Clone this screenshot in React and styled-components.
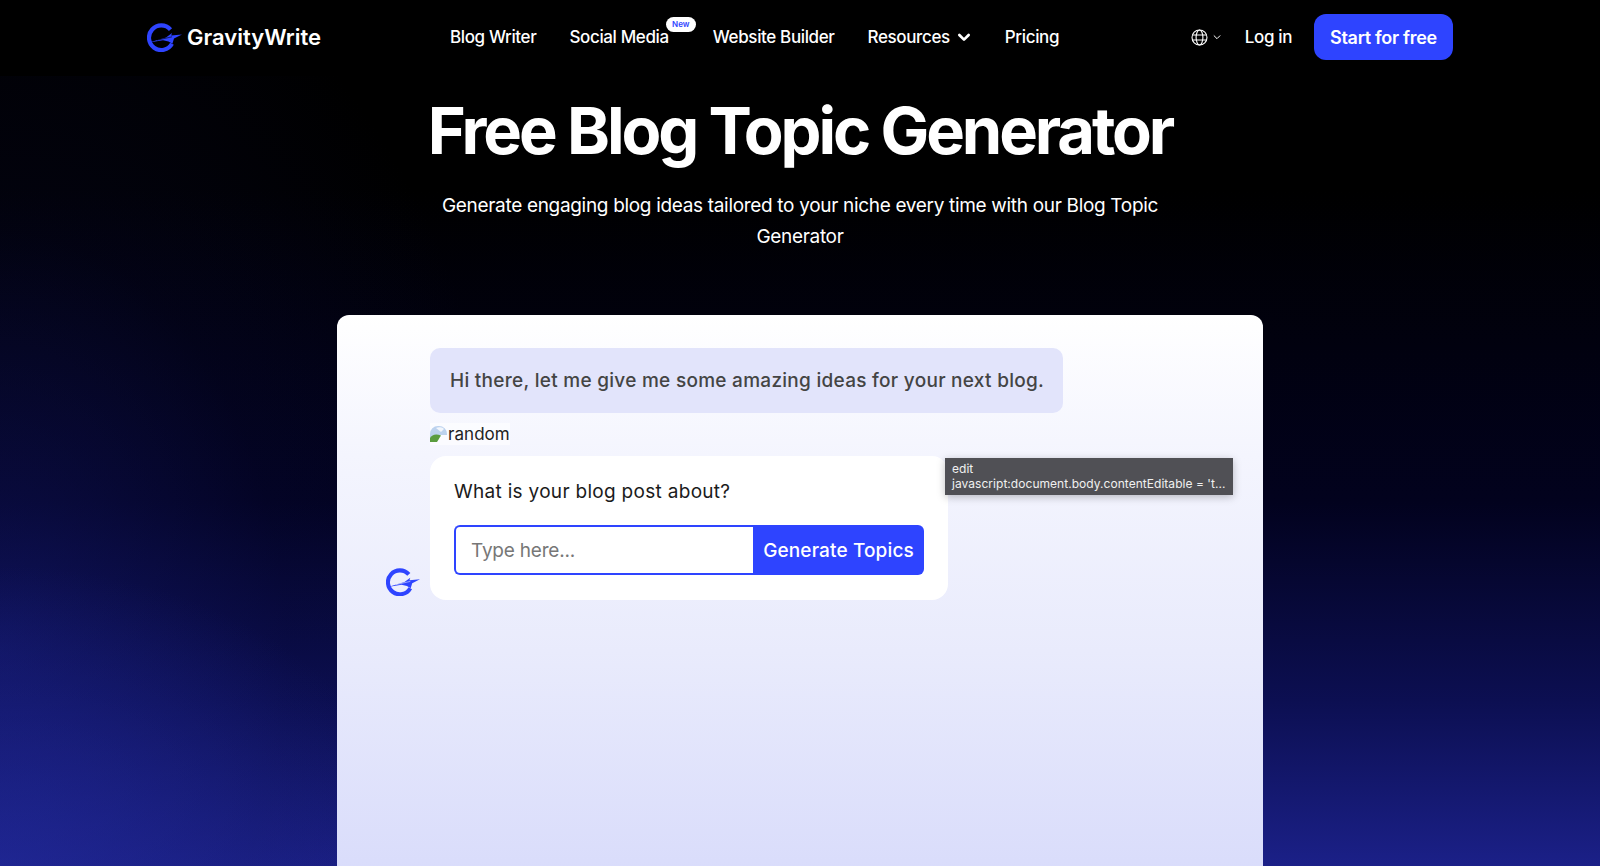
import React from 'react';
import styled, { createGlobalStyle } from 'styled-components';

const GlobalStyle = createGlobalStyle`
  html, body {
    margin: 0;
    height: 866px;
    overflow: hidden;
    background: #000;
    font-family: Inter, "Liberation Sans", sans-serif;
  }
`

const Page = styled.div`
  height: 866px;
  overflow: hidden;
  display: flex;
  flex-direction: column;
  background:
    radial-gradient(420px 300px at 0% 100%, rgba(36, 44, 160, 0.55) 0%, rgba(30, 36, 140, 0) 100%),
    radial-gradient(520px 760px at 0% 75%, rgba(24, 30, 130, 0.42) 0%, rgba(10, 12, 70, 0.2) 55%, rgba(0, 0, 40, 0) 100%),
    linear-gradient(180deg, #000 0%, #000 22%, #02021e 58%, #0c0f52 81%, #1b2088 100%);
`

const Nav = styled.nav`
  height: 76px;
  flex: none;
  box-sizing: border-box;
  background: #000;
  display: flex;
  align-items: center;
  padding: 0 147px 2px;
`

const Brand = styled.div`
  display: flex;
  align-items: center;
  gap: 5px;
  width: 303px;
  color: #fff;
  font-size: 22px;
  font-weight: 600;
`

const Links = styled.div`
  display: flex;
  align-items: center;
  gap: 33px;
  flex: 1;
`

const NavLink = styled.a`
  position: relative;
  display: flex;
  align-items: center;
  gap: 6px;
  margin-right: ${props => props.$badged ? '11px' : '0'};
  color: #fff;
  font-size: 17px;
  font-weight: 500;
  letter-spacing: -0.37px;
`

const NewBadge = styled.span`
  position: absolute;
  top: -10px;
  right: -27px;
  width: 30px;
  height: 15px;
  border-radius: 8px;
  background: #fff;
  color: #2e44ff;
  font-size: 8px;
  font-weight: 600;
  letter-spacing: 0;
  line-height: 15px;
  text-align: center;
`

const NavRight = styled.div`
  display: flex;
  align-items: center;
`

const Lang = styled.div`
  display: flex;
  align-items: center;
  gap: 4px;
  margin-right: 23px;
  color: #fff;
`

const StartButton = styled.a`
  margin-left: 22px;
  width: 139px;
  height: 46px;
  border-radius: 12px;
  background: #2e44ff;
  color: #fff;
  font-size: 18px;
  font-weight: 600;
  letter-spacing: -0.3px;
  display: flex;
  align-items: center;
  justify-content: center;
`

const Hero = styled.header`
  display: flex;
  flex-direction: column;
  align-items: center;
  color: #fff;
`

const Title = styled.h1`
  margin: 14px 0 0;
  font-size: 65px;
  line-height: 82px;
  font-weight: 700;
  letter-spacing: -3.08px;
`

const Subtitle = styled.p`
  margin: 18px 0 0;
  width: 760px;
  text-align: center;
  font-size: 19px;
  line-height: 31px;
  letter-spacing: -0.32px;
`

const Card = styled.main`
  position: relative;
  flex: none;
  width: 926px;
  height: 560px;
  margin: 63px 0 0 337px;
  box-sizing: border-box;
  padding: 33px 0 0 93px;
  border-radius: 12px 12px 0 0;
  background: linear-gradient(180deg, #ffffff 0%, #f4f5fe 25%, #e9ebfc 60%, #d9dcfb 100%);
`

const Bubble = styled.div`
  display: inline-block;
  padding: 0 19px 0 20px;
  height: 65px;
  line-height: 65px;
  border-radius: 10px;
  background: #e2e4fb;
  color: #444;
  font-size: 19px;
  font-weight: 500;
  letter-spacing: 0.28px;
`

const BrokenImage = styled.div`
  display: flex;
  align-items: center;
  width: fit-content;
  height: 22px;
  margin-top: 10px;
  background: rgba(255, 255, 255, 0.6);
  color: #222;
  font-size: 17px;
  letter-spacing: 0.05px;
`

const ChatRow = styled.div`
  position: relative;
  margin-top: 11px;
  width: 518px;
`

const Avatar = styled.div`
  position: absolute;
  left: -44px;
  bottom: 4px;
  display: flex;
`

const FormCard = styled.div`
  box-sizing: border-box;
  height: 144px;
  padding: 24px 24px 0;
  border-radius: 16px;
  background: #fff;
`

const Question = styled.div`
  color: #1b1b1b;
  font-size: 19px;
  line-height: 24px;
  letter-spacing: 0.3px;
`

const InputRow = styled.div`
  display: flex;
  height: 50px;
  margin-top: 21px;
`

const TypeInput = styled.input`
  box-sizing: border-box;
  width: 299px;
  height: 100%;
  padding: 0 15px;
  border: 2px solid #2e44ff;
  border-right: 0;
  border-radius: 6px 0 0 6px;
  outline: none;
  background: #fff;
  font-family: inherit;
  font-size: 19px;
  letter-spacing: -0.2px;
  &::placeholder { color: #777; opacity: 1; }
`

const GenerateButton = styled.button`
  flex: 1;
  height: 100%;
  border: 0;
  border-radius: 0 6px 6px 0;
  background: #2e44ff;
  color: #fff;
  font-family: inherit;
  font-size: 19px;
  font-weight: 500;
  letter-spacing: 0.14px;
  padding: 0;
`

const Tooltip = styled.div`
  position: absolute;
  left: 608px;
  top: 143px;
  box-sizing: border-box;
  width: 288px;
  height: 37px;
  padding: 3px 7px;
  background: #505055;
  color: #f0f0f0;
  font-size: 12px;
  line-height: 15px;
  letter-spacing: 0.04px;
  box-shadow: 0 2px 8px rgba(0, 0, 0, 0.25);
  white-space: nowrap;
`

const Logo = ({ size, slit }) => (
  <svg width={size} height={size * 29 / 35} viewBox="0 0 35 29" fill="none">
    <path d="M23.5 6.6 A12.3 12.3 0 1 0 25 20.8" stroke="#2e44ff" strokeWidth="4.2" />
    <path d="M2 19.5 L19 14.4 L25 10 L24.2 12.6 L35 11.6 L27 15.6 L25.4 20.8 L21.5 18.6 L16 17.2 Z" fill="#2e44ff" />
    <path d="M10 17.2 L25 13.8" stroke={slit} strokeWidth="0.6" />
  </svg>
);

const Globe = () => (
  <svg width="17" height="17" viewBox="0 0 17 17" fill="none" stroke="#fff" strokeWidth="1.1">
    <circle cx="8.5" cy="8.5" r="7.5" />
    <ellipse cx="8.5" cy="8.5" rx="3.4" ry="7.5" />
    <path d="M1.4 6h14.2M1.4 11h14.2" />
  </svg>
);

const Chevron = ({ size, width }) => (
  <svg width={size} height={size} viewBox="0 0 12 12" fill="none" stroke="#fff" strokeWidth={width} strokeLinecap="round" strokeLinejoin="round">
    <path d="M2.5 4.5 6 8l3.5-3.5" />
  </svg>
);

const BrokenIcon = () => (
  <svg width="18" height="16" viewBox="0 0 18 16">
    <path d="M0 16V8a8 8 0 0 1 8-8h1a8 8 0 0 1 8 8v1H10l-4 7z" fill="#bcd2ee" />
    <path d="M6 2a5 3 0 0 1 8 1l-3 3z" fill="#f2f6fc" />
    <path d="M0 16v-4c2-3.5 6-4.5 11-2.5L7 16z" fill="#5a9c3f" />
  </svg>
);

const App = () => (
  <Page>
    <GlobalStyle />
    <Nav>
      <Brand>
        <Logo size={35} slit="#000" />
        GravityWrite
      </Brand>
      <Links>
        <NavLink>Blog Writer</NavLink>
        <NavLink $badged>
          Social Media
          <NewBadge>New</NewBadge>
        </NavLink>
        <NavLink>Website Builder</NavLink>
        <NavLink>
          Resources
          <Chevron size={16} width={2} />
        </NavLink>
        <NavLink>Pricing</NavLink>
      </Links>
      <NavRight>
        <Lang>
          <Globe />
          <Chevron size={10} width={1.2} />
        </Lang>
        <NavLink>Log in</NavLink>
        <StartButton>Start for free</StartButton>
      </NavRight>
    </Nav>
    <Hero>
      <Title>Free Blog Topic Generator</Title>
      <Subtitle>Generate engaging blog ideas tailored to your niche every time with our Blog Topic Generator</Subtitle>
    </Hero>
    <Card>
      <Bubble>Hi there, let me give me some amazing ideas for your next blog.</Bubble>
      <BrokenImage>
        <BrokenIcon />
        random
      </BrokenImage>
      <ChatRow>
        <Avatar>
          <Logo size={34} slit="#e8eafc" />
        </Avatar>
        <FormCard>
          <Question>What is your blog post about?</Question>
          <InputRow>
            <TypeInput placeholder="Type here..." />
            <GenerateButton>Generate Topics</GenerateButton>
          </InputRow>
        </FormCard>
      </ChatRow>
      <Tooltip>
        edit
        <br />
        javascript:document.body.contentEditable = 't...
      </Tooltip>
    </Card>
  </Page>
);

export default App;
